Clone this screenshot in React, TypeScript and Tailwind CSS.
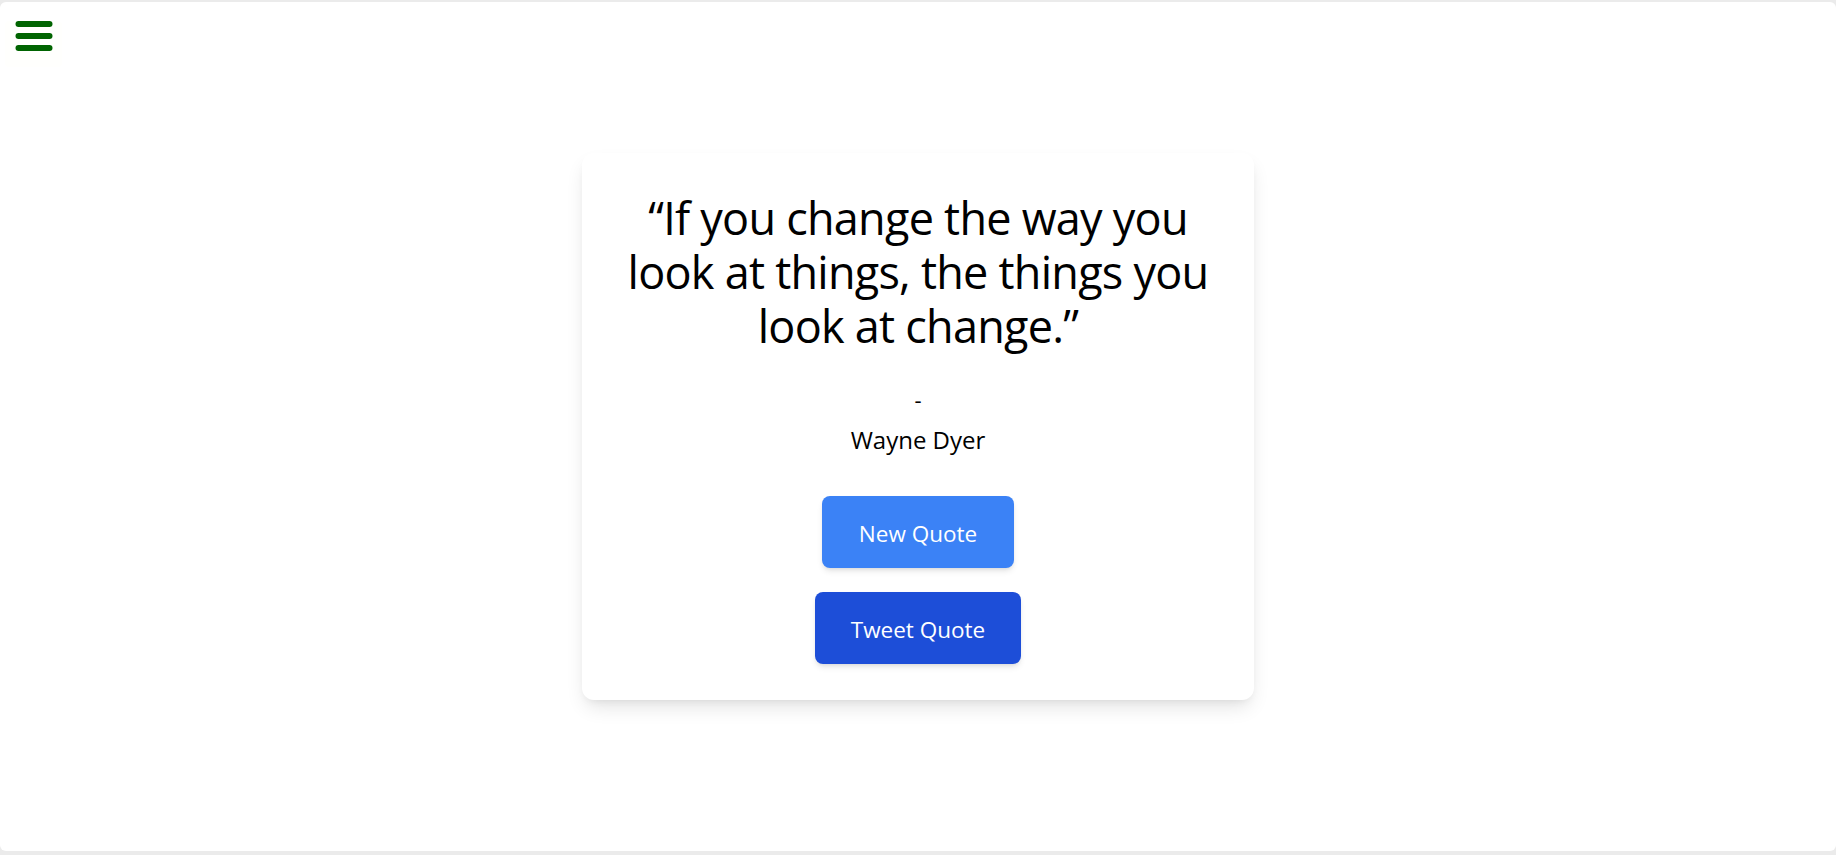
import React from 'react';

const quote = {
  text: 'If you change the way you look at things, the things you look at change.',
  author: 'Wayne Dyer',
};

const MenuIcon = () => (
  <svg width="38" height="32" viewBox="0 0 38 32" aria-hidden="true">
    <rect x="0.5" y="0" width="37" height="6" rx="3" fill="#006400" />
    <rect x="0.5" y="12" width="37" height="6" rx="3" fill="#006400" />
    <rect x="0.5" y="24" width="37" height="6" rx="3" fill="#006400" />
  </svg>
);

export default function App() {
  return (
    <div className="h-[855px] bg-[#ebebeb] pt-[2px] pb-[4px] font-['Open_Sans','Noto_Sans',sans-serif]">
      <div className="relative flex h-full items-center justify-center rounded-[6px] bg-white">
        <button className="absolute left-[5px] top-[19px] flex h-[46px] w-[57px] items-start justify-center rounded-sm bg-[#fffffd] px-[9px] pt-0">
          <MenuIcon />
        </button>

        <div className="flex w-[672px] flex-col items-center rounded-xl bg-white px-10 pt-[38px] pb-9 shadow-[0_10px_20px_-4px_rgba(0,0,0,0.12),0_4px_8px_-4px_rgba(0,0,0,0.08)]">
          <p className="text-center text-[45px] leading-[54px] tracking-[-0.75px] text-black">
            “{quote.text}”
          </p>
          <span className="mt-[30px] text-[22px] leading-8 text-black">-</span>
          <span className="mt-[9px] text-[24px] leading-8 text-black">{quote.author}</span>

          <div className="mt-10 flex flex-col items-center gap-6">
            <button className="h-[72px] rounded-lg bg-[#3b82f6] px-[37px] pt-[3px] text-[22.5px] text-white shadow-md">
              New Quote
            </button>
            <button className="h-[72px] rounded-lg bg-[#1d4ed8] px-[36px] pt-[3px] text-[22.5px] text-white shadow-md">
              Tweet Quote
            </button>
          </div>
        </div>
      </div>
    </div>
  );
}
